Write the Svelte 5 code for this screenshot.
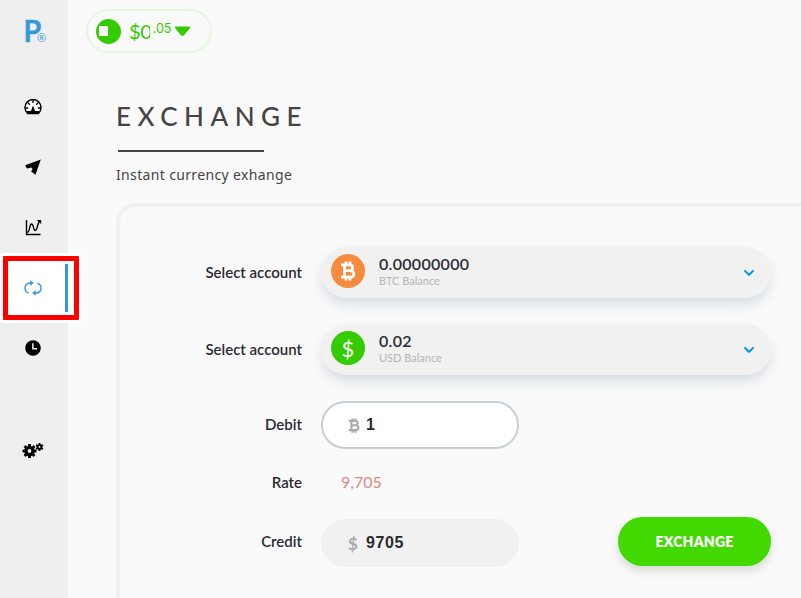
<script>
  const accounts = [
    { code: 'BTC', balance: '0.00000000' },
    { code: 'USD', balance: '0.02' }
  ]
  const nav = ['dashboard', 'send', 'chart', 'exchange', 'history', 'settings']
  const teeth = [0, 45, 90, 135, 180, 225, 270, 315]
  const smallTeeth = [0, 60, 120, 180, 240, 300]

  let active = $state('exchange')
  let debit = $state('1')
  let credit = $state('9705')
</script>

{#snippet bitcoin()}
  <svg class="bitcoin" viewBox="0 0 16 20">
    <path d="M1 3.8H9C14 3.8 14 9.6 9 9.6H5M4.6 3.8V16.2M1 16.2H9.5C15.4 16.2 15.4 9.6 9.5 9.6M6 .5V4M10 .5V4M6 16V19.5M10 16V19.5" />
  </svg>
{/snippet}

<div class="app">
  <aside class="sidebar">
    <div class="logo">P<span>®</span></div>
    <nav>
      {#each nav as item}
        <button class="nav-item {item}" class:active={active === item} aria-label={item} onclick={() => (active = item)}>
          {#if item === 'dashboard'}
            <svg width="18" height="16" viewBox="0 0 18 16">
              <path d="M3.6 14.4A8 8 0 1 1 14.4 14.4Z" fill="#fff" stroke="#000" stroke-width="1.5" />
              <path d="M2.2 12H7L9 6.5L11 12H15.8L14.5 15H3.5Z" fill="#000" />
              <path d="M9 1V4M4 3.8L5.8 5.8M14 3.8L12.2 5.8M1.5 9H4.2M16.5 9H13.8" stroke="#000" stroke-width="1.3" fill="none" />
            </svg>
          {:else if item === 'send'}
            <svg width="16" height="16" viewBox="0 0 16 16">
              <path d="M15.8 .5L.2 6.3L1.8 9.6L6.4 8.4L7.6 10L6.1 12.6L10.5 15.7Z" fill="#000" />
            </svg>
          {:else if item === 'chart'}
            <svg width="17" height="17" viewBox="0 0 17 17">
              <path d="M1.5 1V15.5H15.5" fill="none" stroke="#000" stroke-width="1.4" />
              <path d="M2 13.5C5.5 13.5 4 5 6.5 5S8 11.5 10.3 11.5S12 4 15 2" fill="none" stroke="#000" stroke-width="1.4" />
              <path d="M11.7 1H16.2V5Z" fill="#000" />
            </svg>
          {:else if item === 'exchange'}
            <svg width="18" height="16" viewBox="0 0 18 16">
              <path d="M4.6 12.9C-.5 11.2 -.2 3.3 6 3H8M13.4 3.1C18.5 4.8 18.2 12.7 12 13H10" fill="none" stroke="#3498db" stroke-width="1.4" />
              <path d="M6.3 .2L9.8 3L6.3 5.8ZM11.7 10.2L8.2 13L11.7 15.8Z" fill="#3498db" />
            </svg>
          {:else if item === 'history'}
            <svg width="16" height="16" viewBox="0 0 16 16">
              <circle cx="8" cy="8" r="7.8" fill="#000" />
              <path d="M7.9 3.2V8.7H12" fill="none" stroke="#efefef" stroke-width="1.5" />
            </svg>
          {:else}
            <svg width="22" height="16" viewBox="0 0 22 16">
              {#each teeth as a}
                <path d="M6.1 1H8.9V4H6.1Z" transform="rotate({a} 7.5 8)" />
              {/each}
              <circle cx="7.5" cy="8" r="3.6" fill="none" stroke="#000" stroke-width="3.4" />
              {#each smallTeeth as a}
                <path d="M16.6 0H18.4V2.2H16.6Z" transform="rotate({a} 17.5 4)" />
              {/each}
              <circle cx="17.5" cy="4" r="1.9" fill="none" stroke="#000" stroke-width="2" />
            </svg>
          {/if}
        </button>
      {/each}
    </nav>
  </aside>

  <main>
    <header>
      <div class="wallet">
        <span class="coin"></span>
        <span class="amount">$<span class="zero">0</span></span>
        <sup>.05</sup>
        <svg class="caret" width="17" height="10" viewBox="0 0 17 10">
          <path d="M2 1.5H15L9.5 8.3Q8.5 9.3 7.5 8.3Z" fill="#3c0" stroke="#3c0" stroke-width="2" stroke-linejoin="round" />
        </svg>
      </div>
    </header>

    <h1>EXCHANGE</h1>
    <p class="lead">Instant currency exhange</p>

    <section class="card">
      {#each accounts as account}
        <div class="row">
          <span class="label">Select account</span>
          <div class="select">
            <span class="badge {account.code}">
              {#if account.code === 'BTC'}{@render bitcoin()}{:else}${/if}
            </span>
            <div class="info">
              <strong>{account.balance}</strong>
              <small>{account.code} Balance</small>
            </div>
            <svg class="chevron" width="12" height="8" viewBox="0 0 12 8">
              <path d="M1.4 1.4L6 5.8L10.6 1.4" fill="none" stroke="#0095f0" stroke-width="2" />
            </svg>
          </div>
        </div>
      {/each}

      <div class="row debit">
        <span class="label">Debit</span>
        <div class="field">
          <span class="sign">{@render bitcoin()}</span>
          <input bind:value={debit} aria-label="Debit" />
        </div>
      </div>
      <div class="row rate">
        <span class="label">Rate</span>
        <span class="value">9,705</span>
      </div>
      <div class="row credit">
        <span class="label">Credit</span>
        <div class="field readonly">
          <span class="sign">$</span>
          <input value={credit} readonly aria-label="Credit" />
        </div>
        <button class="submit">EXCHANGE</button>
      </div>
    </section>
  </main>

  <div class="marker"></div>
</div>

<style>
  :global(body) {
    background: #fafafa;
    overflow: hidden;
  }

  .app {
    position: relative;
    display: flex;
    height: 598px;
    overflow: hidden;
    font-family: Lato, "Liberation Sans", sans-serif;
    color: #2b2b33;
    background: #fafafa;
  }

  button {
    border: 0;
    padding: 0;
    font-family: inherit;
    cursor: pointer;
  }

  .sidebar {
    width: 68px;
    flex: none;
    background: #efefef;
  }

  .logo {
    display: flex;
    align-items: baseline;
    height: 61px;
    padding: 15px 0 0 23px;
    box-sizing: border-box;
    font: 600 31px/30px "Open Sans", sans-serif;
    color: #3498db;
    letter-spacing: -5px;
    -webkit-text-stroke: .5px #3498db;
  }

  .logo span {
    font-size: 11px;
    font-weight: normal;
    letter-spacing: 0;
    -webkit-text-stroke: 0;
  }

  nav {
    display: flex;
    flex-direction: column;
    padding-top: 16px;
  }

  .nav-item {
    display: flex;
    align-items: center;
    justify-content: center;
    height: 60px;
    padding-right: 2px;
    background: none;
  }

  .nav-item.active {
    position: relative;
    z-index: 1;
    height: 48px;
    margin: 7px 0 5px;
    padding-right: 0;
    padding-left: 1px;
    border-right: 3px solid #3498db;
  }

  .nav-item.history {
    padding-top: 1px;
    box-sizing: border-box;
  }

  .nav-item.settings {
    margin-top: 44px;
  }

  main {
    flex: 1;
    min-width: 0;
  }

  header {
    height: 65px;
    padding: 9px 0 0 18px;
    box-sizing: border-box;
    border-bottom: 1px solid #f8faf7;
  }

  .wallet {
    display: flex;
    align-items: center;
    width: 126px;
    height: 44px;
    padding-left: 8px;
    box-sizing: border-box;
    border: 2px solid #e6f6e1;
    border-radius: 22px;
    color: #3c0;
  }

  .coin {
    display: flex;
    align-items: center;
    width: 25px;
    height: 25px;
    border-radius: 50%;
    background: #3c0;
  }

  .coin::before {
    content: "";
    width: 9px;
    height: 10px;
    margin-left: 3px;
    background: #fff;
  }

  .amount {
    margin-left: 8px;
    font-size: 20px;
  }

  .zero {
    display: inline-block;
    width: 12px;
    -webkit-mask: linear-gradient(90deg, #000 72%, transparent 80%);
    mask: linear-gradient(90deg, #000 72%, transparent 80%);
  }

  sup {
    margin: -5px 3px 0 0;
    font: 12.5px/14px Inter, sans-serif;
  }

  h1 {
    width: 200px;
    margin: 35px 0 0 48px;
    font: 500 26px/32px Lato, sans-serif;
    letter-spacing: 6.5px;
    color: #444;
  }

  h1::after {
    content: "";
    display: block;
    width: 146px;
    height: 2px;
    margin: 18px 0 0 2px;
    background: #444;
  }

  .lead {
    margin: 13px 0 0 48px;
    font: 14px/20px "Noto Sans", sans-serif;
    letter-spacing: .35px;
    color: #444;
  }

  .card {
    width: 720px;
    height: 450px;
    margin: 18px 0 0 48px;
    padding-top: 40px;
    box-sizing: border-box;
    border: 4px solid #f1f1f1;
    border-radius: 20px;
  }

  .row {
    display: flex;
    align-items: center;
    margin-bottom: 26px;
  }

  .label {
    width: 182px;
    margin-right: 19px;
    padding-bottom: 2px;
    font-size: 15px;
    font-weight: 600;
    text-align: right;
  }

  .select {
    display: flex;
    align-items: center;
    width: 450px;
    height: 51px;
    padding: 0 16px 0 10px;
    box-sizing: border-box;
    border-radius: 26px;
    background: #f1f1f1;
    box-shadow: 0 7px 14px -2px #d0d7de;
  }

  .badge {
    display: flex;
    align-items: center;
    justify-content: center;
    width: 34px;
    height: 34px;
    margin-top: -3px;
    border-radius: 50%;
    font-size: 22px;
    color: #fff;
    background: #3c0;
  }

  .badge.BTC {
    background: #f68b3f;
  }

  .bitcoin {
    width: 16px;
    height: 20px;
    fill: none;
    stroke: currentColor;
    stroke-width: 2.8;
  }

  .info {
    flex: 1;
    margin: -2px 0 0 14px;
  }

  .info strong,
  .info small {
    display: block;
  }

  .info strong {
    font-size: 16px;
    line-height: 18px;
    font-weight: 600;
    letter-spacing: .3px;
  }

  .info small {
    font-size: 11px;
    line-height: 15px;
    color: #b2b6ba;
  }

  .field {
    display: flex;
    align-items: center;
    width: 198px;
    height: 48px;
    padding-left: 25px;
    box-sizing: border-box;
    border: 2px solid #c8cfd5;
    border-radius: 24px;
    background: #fff;
  }

  .field.readonly {
    border-color: #f1f1f1;
    background: #f1f1f1;
  }

  .sign {
    display: flex;
    width: 18px;
    font-size: 17px;
    font-weight: bold;
    color: #aaa;
  }

  .sign .bitcoin {
    width: 12px;
    height: 15px;
  }

  input {
    width: 110px;
    padding: 0;
    border: 0;
    outline: 0;
    font: bold 16px "Liberation Sans", sans-serif;
    letter-spacing: .6px;
    color: #2b2b2b;
    background: none;
  }

  .row.debit {
    margin-bottom: 21px;
  }

  .row.rate {
    height: 24px;
    margin-bottom: 25px;
  }

  .row.rate .label {
    padding-bottom: 0;
  }

  .row.credit {
    height: 48px;
  }

  .row.credit .label {
    padding-bottom: 4px;
  }

  .value {
    margin-left: 20px;
    padding-bottom: 2px;
    font-size: 16px;
    color: #d58a82;
  }

  .submit {
    width: 153px;
    height: 49px;
    margin: -3px 0 0 99px;
    padding-bottom: 1px;
    border-radius: 25px;
    font-size: 14px;
    font-weight: 800;
    letter-spacing: .2px;
    color: #fff;
    background: #41d900;
    box-shadow: 0 5px 10px #d5dbd5;
  }

  /* highlight around the active menu entry */
  .marker {
    position: absolute;
    top: 256px;
    left: 3px;
    width: 76px;
    height: 64px;
    box-sizing: border-box;
    border: 5px solid #f00;
    border-radius: 1px;
    background: #fff;
    box-shadow: 0 0 0 3px #fff;
  }
</style>
